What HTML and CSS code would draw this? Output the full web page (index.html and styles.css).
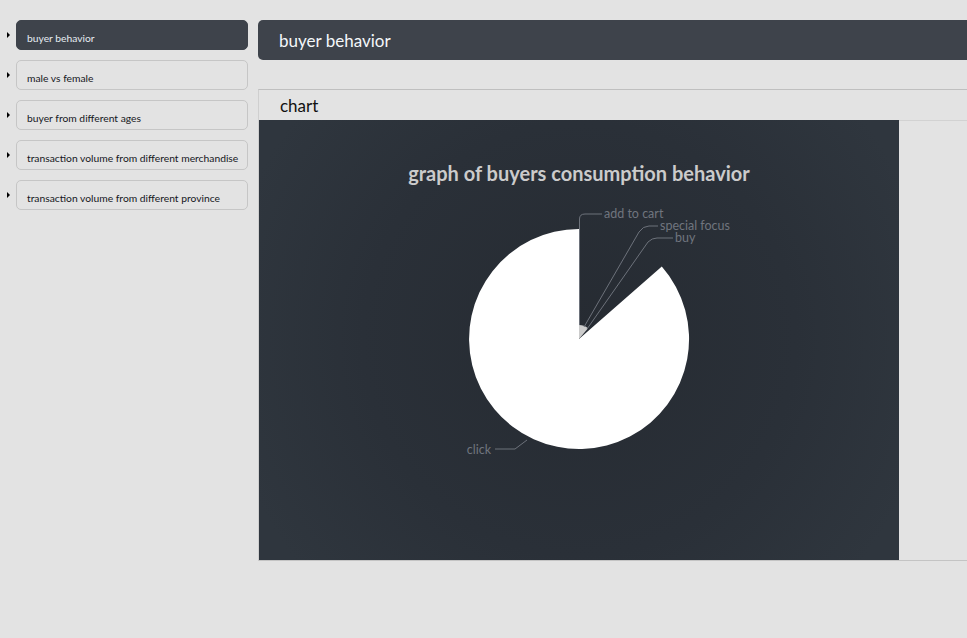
FILE: index.html
```html
<!DOCTYPE html>
<html>
<head>
<meta charset="utf-8">
<link rel="stylesheet" href="styles.css">
</head>
<body>
<div class="page">
  <ul class="nav">
    <li class="nav-item"><span class="btn active">buyer behavior</span></li>
    <li class="nav-item"><span class="btn">male vs female</span></li>
    <li class="nav-item"><span class="btn">buyer from different ages</span></li>
    <li class="nav-item"><span class="btn">transaction volume from different merchandise</span></li>
    <li class="nav-item"><span class="btn">transaction volume from different province</span></li>
  </ul>
  <main class="main">
    <div class="header">buyer behavior</div>
    <section class="panel">
      <div class="panel-title">chart</div>
      <div class="panel-body">
        <svg class="chart" width="640" height="440" viewBox="0 0 640 440">
          <defs>
            <radialGradient id="bg" cx="320" cy="219" r="360" gradientUnits="userSpaceOnUse">
              <stop offset="0" stop-color="#262b32"/>
              <stop offset="0.6" stop-color="#2a3038"/>
              <stop offset="1" stop-color="#2f363e"/>
            </radialGradient>
          </defs>
          <rect width="640" height="440" fill="url(#bg)"/>
          <text class="title" x="320" y="61" text-anchor="middle">graph of buyers consumption behavior</text>
          <path d="M320,219 L402.8,146.5 A110,110 0 1,1 320,109 Z" fill="#ffffff"/>
          <path d="M320,219 L320,205 A14,14 0 0,1 329,208.3 Z" fill="#cccccc"/>
          <g class="lines" fill="none">
            <path d="M320.5,205 L320.5,99 Q320.5,94 326,94 L343,94"/>
            <path d="M325,207 L380,112 Q384,106 390,106 L399,106"/>
            <path d="M328,209 L389,122 Q393,118 398,118 L414,118"/>
            <path d="M268,320 L256,329 L236,329"/>
          </g>
          <g class="labels">
            <text x="345" y="98">add to cart</text>
            <text x="401" y="110">special focus</text>
            <text x="416" y="122">buy</text>
            <text x="232" y="334" text-anchor="end">click</text>
          </g>
        </svg>
      </div>
    </section>
  </main>
</div>
</body>
</html>
```

FILE: styles.css
```css
html, body {
  margin: 0;
  padding: 0;
  background: #e3e3e3;
  overflow: hidden;
  font-family: Lato, "Open Sans", "Liberation Sans", sans-serif;
}

.page {
  display: flex;
  align-items: flex-start;
  padding-top: 20px;
  width: 967px;
  height: 618px;
}

.nav {
  list-style: none;
  margin: 0;
  padding: 0 0 0 16px;
  width: 232px;
  flex: none;
  display: flex;
  flex-direction: column;
  gap: 10px;
}

.nav-item {
  position: relative;
}

.nav-item::before {
  content: "";
  position: absolute;
  left: -9px;
  top: 12px;
  border-left: 3px solid #000;
  border-top: 3px solid transparent;
  border-bottom: 3px solid transparent;
}

.btn {
  display: block;
  box-sizing: border-box;
  height: 30px;
  padding: 11px 0 0 10px;
  border: 1px solid #c6c6c6;
  border-radius: 5px;
  background: #e3e3e3;
  color: #15171d;
  font-size: 10.3px;
  line-height: 12px;
  white-space: nowrap;
}

.btn.active {
  background: #3e434b;
  border-color: #3e434b;
  color: #e6ecf2;
}

.main {
  margin-left: 10px;
  flex: 1;
  min-width: 0;
  display: flex;
  flex-direction: column;
}

.header {
  box-sizing: border-box;
  height: 40px;
  margin-right: -20px;
  padding: 11px 0 0 21px;
  background: #3e434b;
  border-radius: 5px;
  color: #f4f7fa;
  font-size: 17px;
  line-height: 20px;
}

.panel {
  margin-top: 29px;
  border-top: 1px solid #bfbfbf;
  border-left: 1px solid #cfcfcf;
  border-bottom: 1px solid #c4c4c4;
}

.panel-title {
  box-sizing: border-box;
  height: 31px;
  padding: 6px 0 0 21px;
  border-bottom: 1px solid #d2d2d2;
  margin-bottom: -1px;
  color: #111;
  font-size: 17px;
  line-height: 20px;
}

.panel-body {
  display: flex;
}

.chart {
  display: block;
}

.chart .title {
  font-family: Lato, "Open Sans", sans-serif;
  font-weight: 700;
  font-size: 20px;
  fill: #cbcbcb;
}

.chart .lines path {
  stroke: #6d727b;
  stroke-width: 1;
}

.chart .labels text {
  font-family: Lato, "Open Sans", sans-serif;
  font-size: 12.5px;
  fill: #70757e;
}
```
